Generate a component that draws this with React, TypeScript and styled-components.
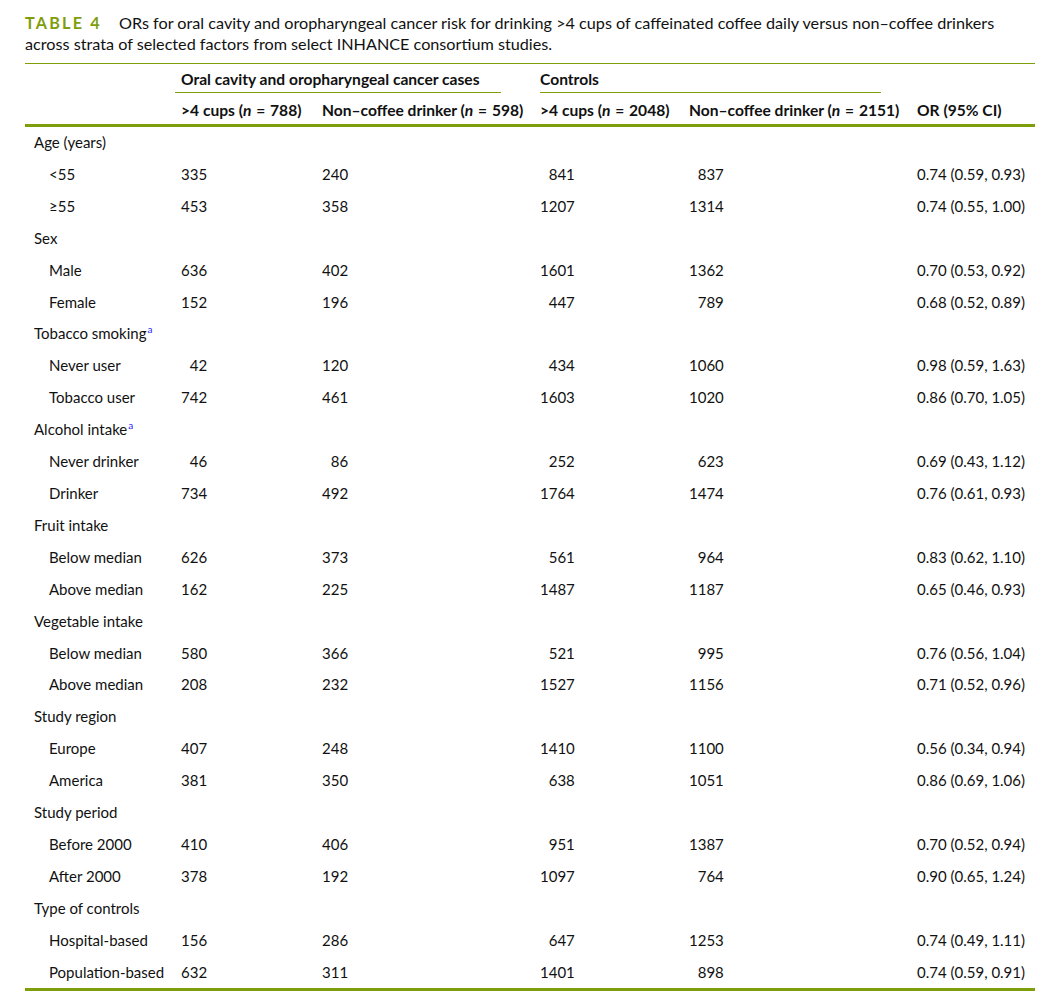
import React from "react";
import styled, { createGlobalStyle } from "styled-components";

const GREEN = "#7f9e0b";

const GlobalStyle = createGlobalStyle`
  body {
    margin: 0;
    background: #fff;
    color: #111;
    font-family: Lato, "Open Sans", sans-serif;
  }
`;

type Row =
  | { kind: "group"; label: string; note?: boolean }
  | { kind: "item"; label: string; values: [string, string, string, string]; or: string };

const rows: Row[] = [
  { kind: "group", label: "Age (years)" },
  { kind: "item", label: "<55", values: ["335", "240", "841", "837"], or: "0.74 (0.59, 0.93)" },
  { kind: "item", label: "≥55", values: ["453", "358", "1207", "1314"], or: "0.74 (0.55, 1.00)" },
  { kind: "group", label: "Sex" },
  { kind: "item", label: "Male", values: ["636", "402", "1601", "1362"], or: "0.70 (0.53, 0.92)" },
  { kind: "item", label: "Female", values: ["152", "196", "447", "789"], or: "0.68 (0.52, 0.89)" },
  { kind: "group", label: "Tobacco smoking", note: true },
  { kind: "item", label: "Never user", values: ["42", "120", "434", "1060"], or: "0.98 (0.59, 1.63)" },
  { kind: "item", label: "Tobacco user", values: ["742", "461", "1603", "1020"], or: "0.86 (0.70, 1.05)" },
  { kind: "group", label: "Alcohol intake", note: true },
  { kind: "item", label: "Never drinker", values: ["46", "86", "252", "623"], or: "0.69 (0.43, 1.12)" },
  { kind: "item", label: "Drinker", values: ["734", "492", "1764", "1474"], or: "0.76 (0.61, 0.93)" },
  { kind: "group", label: "Fruit intake" },
  { kind: "item", label: "Below median", values: ["626", "373", "561", "964"], or: "0.83 (0.62, 1.10)" },
  { kind: "item", label: "Above median", values: ["162", "225", "1487", "1187"], or: "0.65 (0.46, 0.93)" },
  { kind: "group", label: "Vegetable intake" },
  { kind: "item", label: "Below median", values: ["580", "366", "521", "995"], or: "0.76 (0.56, 1.04)" },
  { kind: "item", label: "Above median", values: ["208", "232", "1527", "1156"], or: "0.71 (0.52, 0.96)" },
  { kind: "group", label: "Study region" },
  { kind: "item", label: "Europe", values: ["407", "248", "1410", "1100"], or: "0.56 (0.34, 0.94)" },
  { kind: "item", label: "America", values: ["381", "350", "638", "1051"], or: "0.86 (0.69, 1.06)" },
  { kind: "group", label: "Study period" },
  { kind: "item", label: "Before 2000", values: ["410", "406", "951", "1387"], or: "0.70 (0.52, 0.94)" },
  { kind: "item", label: "After 2000", values: ["378", "192", "1097", "764"], or: "0.90 (0.65, 1.24)" },
  { kind: "group", label: "Type of controls" },
  { kind: "item", label: "Hospital-based", values: ["156", "286", "647", "1253"], or: "0.74 (0.49, 1.11)" },
  { kind: "item", label: "Population-based", values: ["632", "311", "1401", "898"], or: "0.74 (0.59, 0.91)" },
];

// digits each count column is aligned to
const DIGITS = [3, 3, 4, 4];

const Page = styled.div`
  width: 1010px;
  padding: 12px 0 0 25px;
`;

const Caption = styled.p`
  margin: 0 0 9px;
  font-size: 16.2px;
  line-height: 21px;
  white-space: nowrap;
`;

const Label = styled.span`
  color: ${GREEN};
  font-weight: 700;
  letter-spacing: 2.2px;
  margin-right: 17px;
`;

const Table = styled.table`
  width: 1010px;
  border-collapse: collapse;
  table-layout: fixed;
  font-size: 15px;
  border-top: 1px solid ${GREEN};
  border-bottom: 3px solid ${GREEN};
`;

const Head = styled.thead`
  border-bottom: 3px solid ${GREEN};
`;

const HeadCell = styled.th<{ $top?: boolean }>`
  padding: ${({ $top }) => ($top ? "5px 6px 0 0" : "7px 6px 4px")};
  font-size: 15.6px;
  font-weight: 700;
  text-align: left;
  line-height: 20px;
  white-space: nowrap;
  vertical-align: bottom;
`;

const SpanTitle = styled.div<{ $left: number; $right: number }>`
  margin: 0 ${({ $right }) => $right}px 0 ${({ $left }) => $left}px;
  padding: 0 0 3px ${({ $left }) => 6 - $left}px;
  border-bottom: 1px solid ${GREEN};
`;

const Cell = styled.td<{ $indent?: boolean }>`
  padding: 0 6px 0 ${({ $indent }) => ($indent ? 24 : 6)}px;
  line-height: 31.9px;
  white-space: nowrap;
  vertical-align: middle;
`;

const GroupCell = styled(Cell)`
  padding-left: 9px;
`;

const Num = styled.span<{ $digits: number }>`
  display: inline-block;
  width: ${({ $digits }) => $digits * 0.58}em;
  text-align: right;
`;

const Note = styled.sup`
  color: #1f1ff5;
  font-size: 10px;
  line-height: 0;
  margin-left: 1px;
`;

const Italic = styled.i`
  font-style: italic;
`;

const Equals = styled.span`
  margin: 0 1px;
`;

const N = ({ n }: { n: string }) => (
  <>
    (<Italic>n</Italic> <Equals>=</Equals> {n})
  </>
);

const App = () => {
  return (
    <>
      <GlobalStyle />
      <Page>
        <Caption>
          <Label>TABLE 4</Label>
          ORs for oral cavity and oropharyngeal cancer risk for drinking &gt;4 cups of caffeinated coffee daily versus non–coffee drinkers
          <br />
          across strata of selected factors from select INHANCE consortium studies.
        </Caption>
        <Table>
          <colgroup>
            <col style={{ width: 150 }} />
            <col style={{ width: 141 }} />
            <col style={{ width: 218 }} />
            <col style={{ width: 149 }} />
            <col style={{ width: 228 }} />
            <col style={{ width: 124 }} />
          </colgroup>
          <Head>
            <tr>
              <HeadCell $top />
              <HeadCell $top colSpan={2}>
                <SpanTitle $left={0} $right={27}>
                  Oral cavity and oropharyngeal cancer cases
                </SpanTitle>
              </HeadCell>
              <HeadCell $top colSpan={2}>
                <SpanTitle $left={6} $right={24}>
                  Controls
                </SpanTitle>
              </HeadCell>
              <HeadCell $top />
            </tr>
            <tr>
              <HeadCell />
              <HeadCell>
                &gt;4 cups <N n="788" />
              </HeadCell>
              <HeadCell>
                Non–coffee drinker <N n="598" />
              </HeadCell>
              <HeadCell>
                &gt;4 cups <N n="2048" />
              </HeadCell>
              <HeadCell>
                Non–coffee drinker <N n="2151" />
              </HeadCell>
              <HeadCell>OR (95% CI)</HeadCell>
            </tr>
          </Head>
          <tbody>
            {rows.map((row, i) =>
              row.kind === "group" ? (
                <tr key={i}>
                  <GroupCell colSpan={6}>
                    {row.label}
                    {row.note && <Note>a</Note>}
                  </GroupCell>
                </tr>
              ) : (
                <tr key={i}>
                  <Cell $indent>{row.label}</Cell>
                  {row.values.map((v, j) => (
                    <Cell key={j}>
                      <Num $digits={DIGITS[j]}>{v}</Num>
                    </Cell>
                  ))}
                  <Cell>{row.or}</Cell>
                </tr>
              )
            )}
          </tbody>
        </Table>
      </Page>
    </>
  );
};

export default App;
